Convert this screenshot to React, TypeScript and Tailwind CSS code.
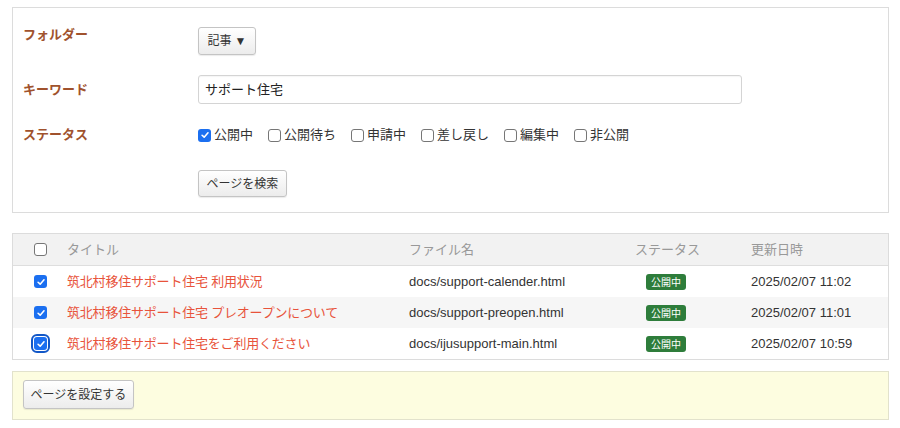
import React from "react";

const font = { fontFamily: '"Liberation Sans", "Noto Sans CJK JP", sans-serif' };

function Check({ checked, focus }: { checked?: boolean; focus?: boolean }) {
  if (checked) {
    return (
      <span
        className={`inline-flex items-center justify-center w-[13px] h-[13px] rounded-[3px] bg-[#1b6ff0] shrink-0 ${
          focus ? "outline-2 outline-[#1257c7] outline-offset-[1px]" : ""
        }`}
      >
        <svg viewBox="0 0 12 12" className="w-[10px] h-[10px]">
          <path d="M2.5 6.3 L5 8.6 L9.6 3.4" fill="none" stroke="#fff" strokeWidth="1.9" strokeLinecap="round" strokeLinejoin="round" />
        </svg>
      </span>
    );
  }
  return <span className="inline-block w-[13px] h-[13px] rounded-[3px] border border-[#767676] bg-white shrink-0" />;
}

function Btn({ children, className = "" }: { children: React.ReactNode; className?: string }) {
  return (
    <button
      className={`flex items-center justify-center rounded-[3px] border border-[#c4c4c4] bg-gradient-to-b from-white to-[#ececec] text-[12px] text-[#333] shadow-[0_1px_1px_rgba(0,0,0,0.08)] ${className}`}
    >
      {children}
    </button>
  );
}

const statuses = [
  { label: "公開中", checked: true },
  { label: "公開待ち" },
  { label: "申請中" },
  { label: "差し戻し" },
  { label: "編集中" },
  { label: "非公開" },
];

const rows = [
  { title: "筑北村移住サポート住宅 利用状況", file: "docs/support-calender.html", date: "2025/02/07 11:02" },
  { title: "筑北村移住サポート住宅 プレオープンについて", file: "docs/support-preopen.html", date: "2025/02/07 11:01" },
  { title: "筑北村移住サポート住宅をご利用ください", file: "docs/ijusupport-main.html", date: "2025/02/07 10:59" },
];

export default function App() {
  return (
    <div className="w-[900px] h-[428px] bg-white pl-3 pr-[11px] pt-[7px] text-[13px] text-[#333]" style={font}>
      {/* search panel */}
      <div className="border border-[#dcdcdc] pl-[10px] pt-[17px] pb-[15px]">
        <div className="flex items-start">
          <div className="w-[175px] leading-[20px] font-bold text-[#a0522d]">フォルダー</div>
          <Btn className="mt-[2px] w-[58px] h-[28px] gap-[3px]">
            記事<span className="text-[12px] leading-none">▼</span>
          </Btn>
        </div>
        <div className="flex items-center mt-[20px]">
          <div className="w-[175px] leading-[20px] font-bold text-[#a0522d]">キーワード</div>
          <div className="w-[544px] h-[29px] rounded-[3px] border border-[#d4d4d4] flex items-center px-[6px] text-[13px] text-[#222] shadow-[inset_0_1px_1px_rgba(0,0,0,0.04)]">
            サポート住宅
          </div>
        </div>
        <div className="flex items-center mt-[21px] h-[20px]">
          <div className="w-[175px] leading-[20px] font-bold text-[#a0522d]">ステータス</div>
          <div className="flex items-center gap-[15px]">
            {statuses.map((s) => (
              <label key={s.label} className="flex items-center gap-[3px]">
                <Check checked={s.checked} />
                <span>{s.label}</span>
              </label>
            ))}
          </div>
        </div>
        <div className="flex mt-[25px]">
          <div className="w-[175px]" />
          <Btn className="w-[89px] h-[27px]">ページを検索</Btn>
        </div>
      </div>

      {/* list */}
      <div className="mt-[20px] border border-[#dcdcdc]">
        <div className="flex items-center h-[32px] bg-[#f2f2f2] border-b border-[#dedede] text-[#999]">
          <div className="w-[54px] pl-[21px] flex">
            <Check />
          </div>
          <div className="w-[342px]">タイトル</div>
          <div className="w-[226px]">ファイル名</div>
          <div className="w-[116px]">ステータス</div>
          <div className="flex-1">更新日時</div>
        </div>
        {rows.map((r, i) => (
          <div key={r.file} className={`flex items-center h-[31px] ${i === 1 ? "bg-[#f6f6f6]" : "bg-white"}`}>
            <div className="w-[54px] pl-[21px] flex">
              <Check checked focus={i === 2} />
            </div>
            <div className="w-[342px] text-[#e8533b] tracking-[-0.2px]">{r.title}</div>
            <div className="w-[226px]">{r.file}</div>
            <div className="w-[116px]">
              <span className="ml-[11px] inline-flex items-center justify-center w-[40px] h-[16px] rounded-[3px] bg-[#2e7d3b] text-white text-[10px]">
                公開中
              </span>
            </div>
            <div className="flex-1">{r.date}</div>
          </div>
        ))}
      </div>

      {/* footer */}
      <div className="mt-[11px] border border-[#e2e2cc] bg-[#fdfde0] pl-[10px] pt-[8px] pb-[10px]">
        <Btn className="w-[111px] h-[29px]">ページを設定する</Btn>
      </div>
    </div>
  );
}
